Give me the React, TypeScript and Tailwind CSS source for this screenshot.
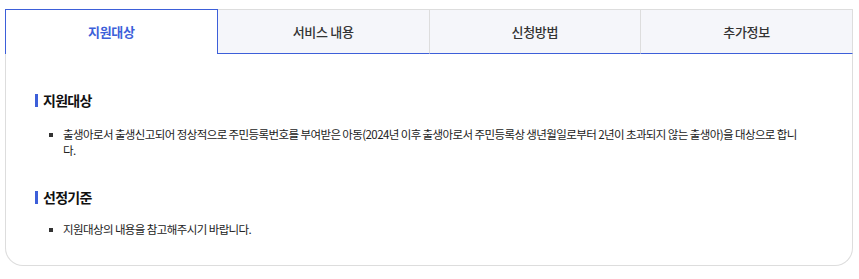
import React from "react";

const tabs = ["지원대상", "서비스 내용", "신청방법", "추가정보"];

export default function App() {
  return (
    <div
      className="bg-white w-[859px] h-[279px] pt-[9px] pl-[5px] pr-[6px]"
      style={{ fontFamily: '"Noto Sans CJK KR", "Noto Sans", sans-serif' }}
    >
      <div className="flex h-[45px]">
        {tabs.map((t, i) =>
          i === 0 ? (
            <div
              key={t}
              className="flex-1 flex items-center justify-center border-t border-l border-r border-[#3d5fd9] bg-white text-[13px] font-bold text-[#3d5fd9] tracking-[-0.3px]"
            >
              {t}
            </div>
          ) : (
            <div
              key={t}
              className="flex-1 flex items-center justify-center border-t border-r border-b border-t-[#dddddd] border-r-[#dddddd] border-b-[#3d5fd9] bg-[#f5f6fa] text-[13px] font-medium text-[#333333] tracking-[-0.3px]"
            >
              {t}
            </div>
          )
        )}
      </div>
      <div className="border-l border-r border-b border-[#dddddd] rounded-b-[18px] h-[212px] pl-[29px] pr-[50px] pt-[36px]">
        <h3 className="flex items-center gap-[5px] text-[14px] font-bold text-[#111111] leading-[20px] tracking-[-0.7px]">
          <span className="w-[3px] h-[13px] bg-[#3d5fd9]"></span>
          지원대상
        </h3>
        <ul className="mt-[16px] pl-[14px] text-[11.5px] text-[#222222] leading-[16px] tracking-[-0.6px]">
          <li className="flex">
            <span className="w-[4px] h-[4px] bg-[#333333] mt-[7px] mr-[10px] shrink-0"></span>
            <span>
              출생아로서 출생신고되어 정상적으로 주민등록번호를 부여받은 아동(2024년 이후 출생아로서 주민등록상 생년월일로부터 2년이 초과되지 않는 출생아)을 대상으로 합니다.
            </span>
          </li>
        </ul>
        <h3 className="mt-[29px] flex items-center gap-[5px] text-[14px] font-bold text-[#111111] leading-[20px] tracking-[-0.7px]">
          <span className="w-[3px] h-[13px] bg-[#3d5fd9]"></span>
          선정기준
        </h3>
        <ul className="mt-[13px] pl-[14px] text-[11.5px] text-[#222222] leading-[19px] tracking-[-0.6px]">
          <li className="flex">
            <span className="w-[4px] h-[4px] bg-[#333333] mt-[8px] mr-[10px] shrink-0"></span>
            <span>지원대상의 내용을 참고해주시기 바랍니다.</span>
          </li>
        </ul>
      </div>
    </div>
  );
}
